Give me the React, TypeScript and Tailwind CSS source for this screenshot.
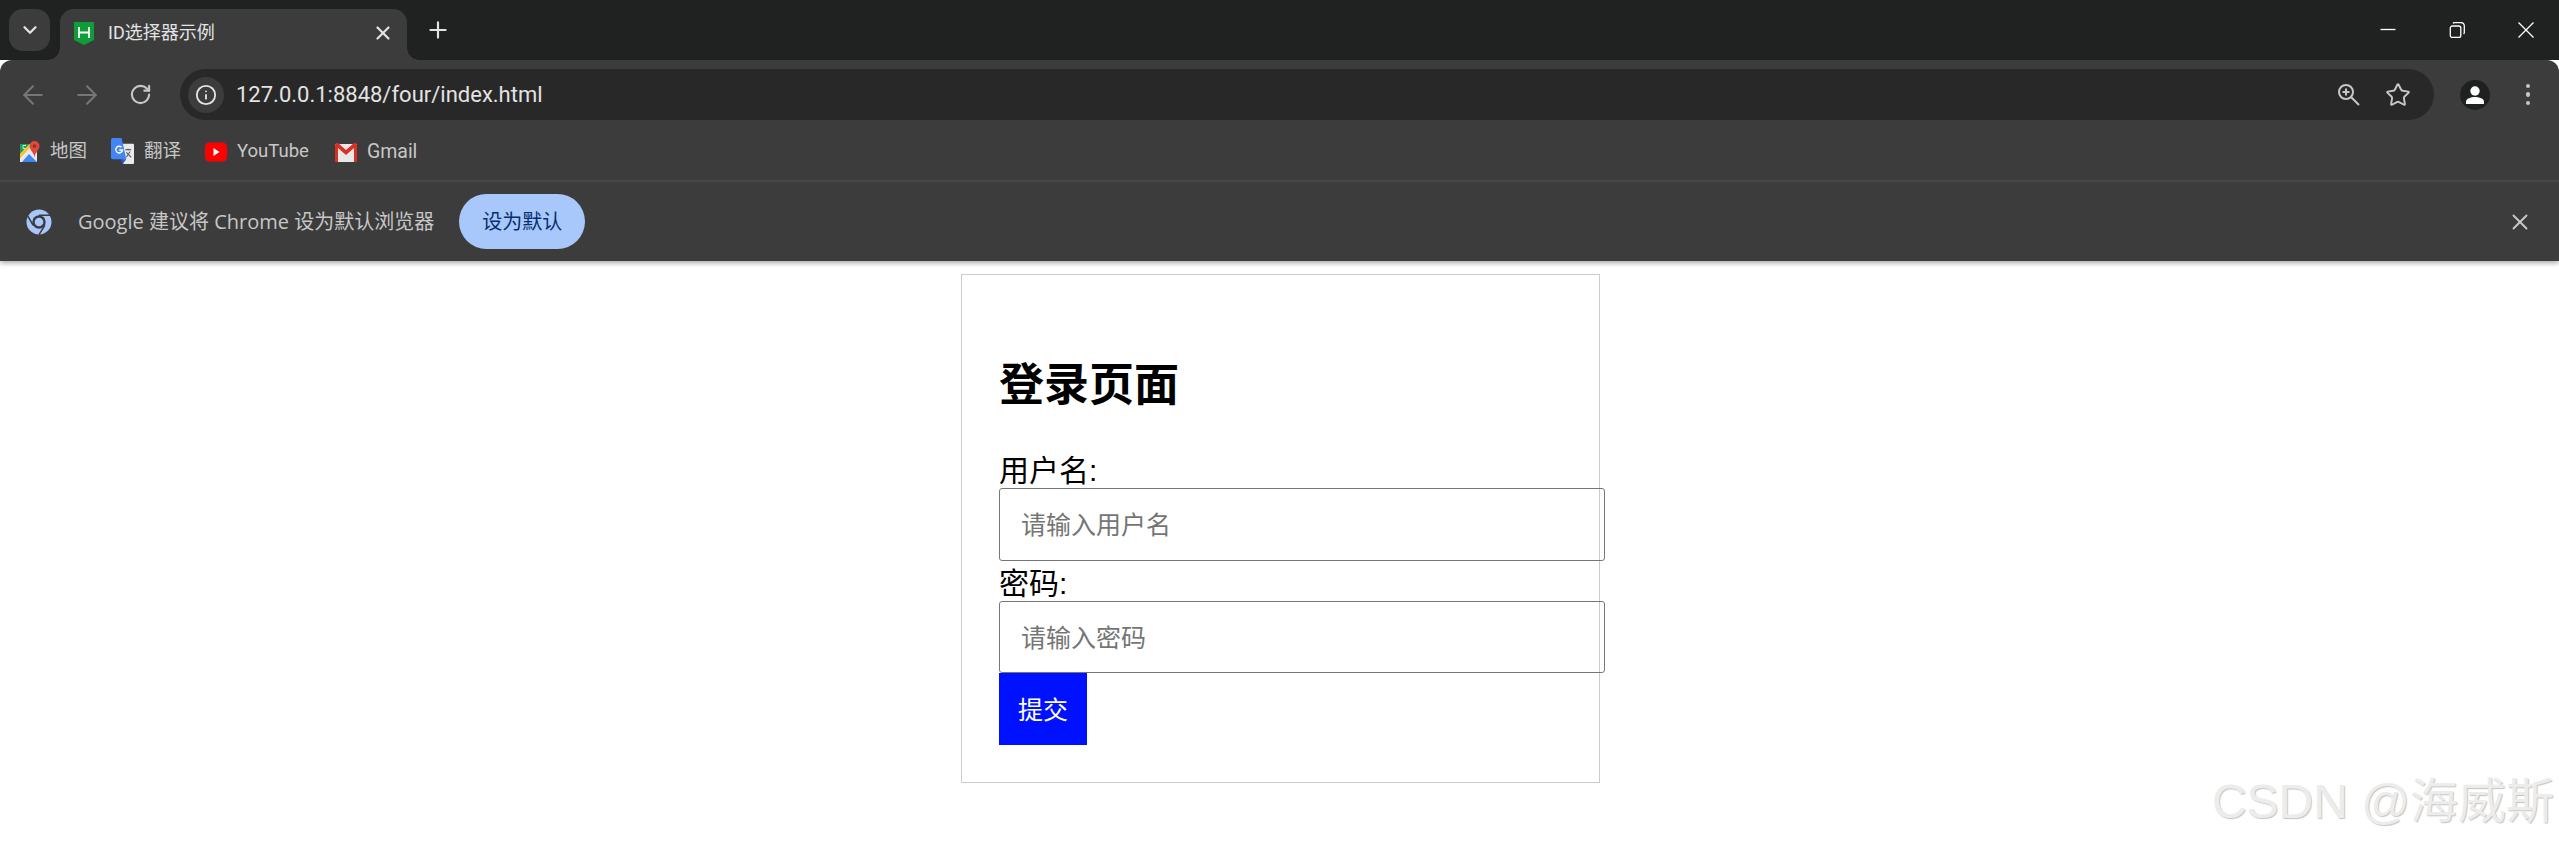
import { ArrowLeft, ArrowRight, ChevronDown, Info, Plus, RotateCw, Star, X } from "lucide-react";

const uiFont = "font-['Roboto','Noto_Sans_CJK_SC',sans-serif]";
const pageFont = "font-['Liberation_Sans','Noto_Sans_CJK_SC',sans-serif]";

const MapsIcon = () => (
  <svg viewBox="0 0 20 21" className="h-[21px] w-[20px]">
    <path d="M0 3h17v18H0z" fill="#e8eaed" />
    <path d="M0 3h10L0 13z" fill="#1e9e5a" />
    <path d="M3 4.500h3M3 4.500v3h3" stroke="#cfe8d8" strokeWidth="1" fill="none" />
    <path d="M0 13 10 3h3.500L0 17.500z" fill="#fbc02d" />
    <path d="M2 21l7-8 8 8z" fill="#4285f4" />
    <path d="M14.500 0a5 5 0 0 1 5 5c0 4-5 7-5 12 0-5-5-8-5-12a5 5 0 0 1 5-5z" fill="#e0483b" />
    <circle cx="14.500" cy="5" r="1.800" fill="#9c2b20" />
  </svg>
);

const TranslateIcon = () => (
  <svg viewBox="0 0 24 28" className="h-[27px] w-[23px]">
    <path d="M9 6h14a1 1 0 0 1 1 1v19a1 1 0 0 1-1 1H13z" fill="#e8eaed" />
    <path d="M15 12h6M18 11v2M16 20l4-6M16 15l5 5" stroke="#5f6368" strokeWidth="1.200" fill="none" />
    <path d="M2 0h9l5 22H2a2 2 0 0 1-2-2V2a2 2 0 0 1 2-2z" fill="#4285f4" />
    <path d="m10 22 6 0-4 5z" fill="#2a56c6" />
    <path d="M11 9.500a3.500 3.500 0 1 0 1 3H8.500" stroke="#fff" strokeWidth="1.500" fill="none" />
  </svg>
);

const YoutubeIcon = () => (
  <svg viewBox="0 0 22 20" className="h-[20px] w-[22px]">
    <rect width="22" height="19" y="0.500" rx="4.500" fill="#ff0000" />
    <path d="m8.500 6 6 4-6 4z" fill="#fff" />
  </svg>
);

const GmailIcon = () => (
  <svg viewBox="0 0 22 20" className="h-[20px] w-[22px]">
    <path d="M0 2h22v18H0z" fill="#e8e8e8" />
    <path d="M0 3a2 2 0 0 1 2-2h1l8 7 8-7h1a2 2 0 0 1 2 2v17h-3V6l-8 7-8-7v14H0z" fill="#d93025" />
  </svg>
);

const ChromeIcon = () => (
  <svg viewBox="0 0 26 26" className="h-[26px] w-[26px]" fill="none">
    <circle cx="13" cy="13" r="12.500" fill="#a8c7fa" />
    <circle cx="13" cy="13" r="6.700" fill="#3c3c3c" />
    <circle cx="13" cy="13" r="4.300" fill="#a8c7fa" />
    <path d="M13 6.300h11M7.200 16.400 1.700 6.800M18.800 16.300 13 25.700" stroke="#3c3c3c" strokeWidth="1.500" />
  </svg>
);

const WindowIcon = ({ d }: { d: string }) => (
  <svg viewBox="0 0 16 16" className="h-[16px] w-[16px]" fill="none" stroke="#fff" strokeWidth="1.300">
    <path d={d} />
  </svg>
);

const ZoomGlass = () => (
  <svg viewBox="0 0 22 22" className="h-[22px] w-[22px]" fill="none" stroke="#c7c7c7" strokeWidth="2">
    <circle cx="8" cy="8" r="7" />
    <path d="M13 13l8 8M4.500 8h7M8 4.500v7" />
  </svg>
);

const AvatarIcon = () => (
  <svg viewBox="0 0 30 30" className="h-[30px] w-[30px]">
    <circle cx="15" cy="15" r="15" fill="#1f2121" />
    <circle cx="15" cy="11" r="4.700" fill="#fff" />
    <path d="M6 24v-2.500c0-2.800 5-4.500 9-4.500s9 1.700 9 4.500V24z" fill="#fff" />
  </svg>
);

const bookmarks = [
  { label: "地图", icon: <MapsIcon />, cls: "" },
  { label: "翻译", icon: <TranslateIcon />, cls: "" },
  { label: "YouTube", icon: <YoutubeIcon />, cls: "" },
  { label: "Gmail", icon: <GmailIcon />, cls: "ml-[2px] text-[19.500px]" },
];

const BrowserChrome = () => (
  <div className={`${uiFont} relative z-10 shadow-[0_2px_5px_rgba(0,0,0,0.35)]`}>
    {/* tab strip */}
    <div className="flex h-[60px] items-end bg-[#202222]">
      <div className="mb-[9px] ml-[9px] flex h-[42px] w-[41px] items-center justify-center rounded-[14px] bg-[#3c3c3c]">
        <ChevronDown size={22} strokeWidth={2.500} color="#e3e3e3" />
      </div>
      <div className="relative ml-[10px] flex h-[51px] w-[347px] items-center rounded-t-[14px] bg-[#3c3c3c] pb-[3px] pl-[14px] pr-[13px]">
        <div className="absolute bottom-0 left-[-12px] h-[12px] w-[12px] bg-[radial-gradient(circle_at_0_0,#202222_11.500px,#3c3c3c_12px)]" />
        <div className="absolute bottom-0 right-[-12px] h-[12px] w-[12px] bg-[radial-gradient(circle_at_100%_0,#202222_11.500px,#3c3c3c_12px)]" />
        <svg viewBox="0 0 20 23" className="h-[23px] w-[20px] shrink-0">
          <path d="M0 0h20v18l-10 5-10-5z" fill="#0f9d3a" />
          <path d="M5 5v11M15 5v11M5 10.500h10" stroke="#fff" strokeWidth="1.800" fill="none" />
        </svg>
        <span className="ml-[14px] flex-1 text-[18px] leading-none text-[#e3e3e3]">ID选择器示例</span>
        <X size={22} strokeWidth={2.400} color="#e3e3e3" />
      </div>
      <div className="mb-[17px] ml-[18px]">
        <Plus size={26} strokeWidth={2} color="#e3e3e3" />
      </div>
      <div className="mb-[22px] ml-auto flex items-center gap-[53px] pr-[25px]">
        <WindowIcon d="M0.500 7.500h15" />
        <WindowIcon d="M1.300 6a2 2 0 0 1 2-2h6.500a2 2 0 0 1 2 2v7.500a2 2 0 0 1-2 2H3.300a2 2 0 0 1-2-2zM4 1.300a2 2 0 0 1 1.500-.7h6.500a3.300 3.300 0 0 1 3.300 3.300v6.500a2 2 0 0 1-.7 1.500" />
        <WindowIcon d="M0.500 0.500l15 15M15.500 0.500l-15 15" />
      </div>
    </div>

    {/* toolbar */}
    <div className="flex h-[60px] items-center rounded-t-[12px] bg-[#3c3c3c] pl-[18px] pr-[29px] pt-[9px]">
      <ArrowLeft size={30} color="#767676" strokeWidth={1.600} />
      <ArrowRight size={30} color="#767676" strokeWidth={1.600} className="ml-[24px]" />
      <RotateCw size={23} color="#c7c7c7" strokeWidth={2.200} className="ml-[27px]" />
      <div className="ml-[28px] flex h-[51px] flex-1 items-center rounded-full bg-[#282828] pl-[8px] pr-[23px]">
        <div className="flex h-[36px] w-[36px] items-center justify-center rounded-full bg-[#3c3c3c]">
          <Info size={22} color="#e3e3e3" strokeWidth={2} />
        </div>
        <span className="ml-[12px] flex-1 text-[22px] leading-none text-[#e3e3e3]">127.0.0.1:8848/four/index.html</span>
        <ZoomGlass />
        <Star size={26} color="#c7c7c7" strokeWidth={1.800} className="ml-[25px]" />
      </div>
      <div className="ml-[26px]">
        <AvatarIcon />
      </div>
      <div className="ml-[36px] flex flex-col gap-[4px]">
        <span className="h-[4.500px] w-[4.500px] rounded-full bg-[#c7c7c7]" />
        <span className="h-[4.500px] w-[4.500px] rounded-full bg-[#c7c7c7]" />
        <span className="h-[4.500px] w-[4.500px] rounded-full bg-[#c7c7c7]" />
      </div>
    </div>

    {/* bookmarks bar */}
    <div className="flex h-[62px] items-center gap-[24px] border-b-2 border-[#474747] bg-[#3c3c3c] pl-[20px] pt-[3px] text-[18.500px] text-[#c7c7c7]">
      {bookmarks.map((b) => (
        <div key={b.label} className={`flex items-center gap-[10px] ${b.cls}`}>
          {b.icon}
          <span>{b.label}</span>
        </div>
      ))}
    </div>

    {/* default browser prompt */}
    <div className="flex h-[79px] items-center bg-[#3c3c3c] pl-[26px] pr-[26px] font-['Open_Sans','Noto_Sans_CJK_SC',sans-serif] text-[20px] text-[#c7c7c7]">
      <ChromeIcon />
      <span className="ml-[26px]">Google 建议将 Chrome 设为默认浏览器</span>
      <div className="ml-[25px] flex h-[55px] w-[126px] items-center justify-center rounded-full bg-[#a8c7fa] text-[#062e6f]">
        设为默认
      </div>
      <X size={26} strokeWidth={1.800} color="#c7c7c7" className="ml-auto" />
    </div>
  </div>
);

export default function App() {
  return (
    <div className="relative h-[843px] overflow-hidden bg-white">
      <BrowserChrome />
      <div className={`${pageFont} ml-[961px] mt-[13px] h-[509px] w-[639px] border border-[#cccccc] px-[37px] pt-[85px] text-black`}>
        <h2 className="text-[45px] font-bold leading-[52px]">登录页面</h2>
        <form className="mt-[41px]">
          <label className="block text-[30px] leading-[35px]">用户名:</label>
          <input
            placeholder="请输入用户名"
            className="block h-[73px] w-[606px] rounded-[3px] border border-[#767676] px-[21px] pt-[2px] text-[25px] placeholder:text-[#757575]"
          />
          <label className="mt-[5px] block text-[30px] leading-[35px]">密码:</label>
          <input
            placeholder="请输入密码"
            className="block h-[72px] w-[606px] rounded-[3px] border border-[#767676] px-[21px] pt-[2px] text-[25px] placeholder:text-[#757575]"
          />
          <button type="button" className="block h-[72px] w-[88px] bg-[#0011ff] pt-[3px] text-[25px] text-white">
            提交
          </button>
        </form>
      </div>
      <div className={`${pageFont} absolute bottom-[12px] right-[5px] text-[48px] leading-[58px] text-[#ececec] [text-shadow:1px_1px_1px_#c4c4c4]`}>
        CSDN @海威斯
      </div>
    </div>
  );
}
